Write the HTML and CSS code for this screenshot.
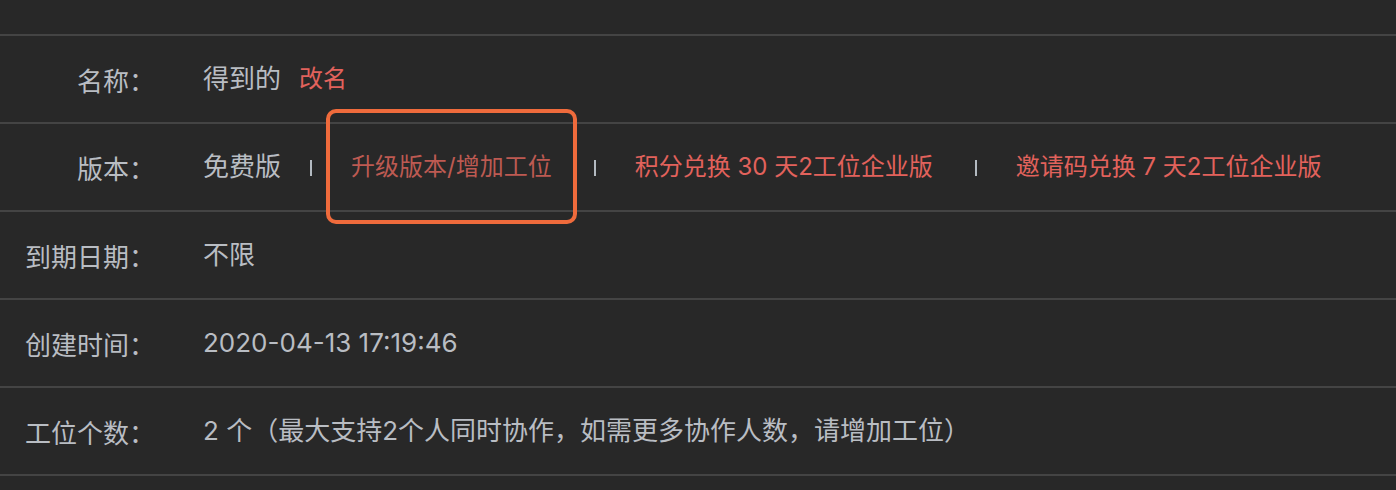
FILE: index.html
```html
<!DOCTYPE html>
<html lang="zh-CN">
<head>
<meta charset="utf-8">
<title>工作区信息</title>
<link rel="stylesheet" href="styles.css">
</head>
<body>
<div class="info">
  <div class="row">
    <div class="label">名称：</div>
    <div class="value">得到的<a class="link rename">改名</a></div>
  </div>
  <div class="row">
    <div class="label">版本：</div>
    <div class="value">
      <span class="plain">免费版</span>
      <span class="sep"></span>
      <a class="link upgrade">升级版本/增加工位<span class="mark"></span></a>
      <span class="sep"></span>
      <a class="link">积分兑换 30 天2工位企业版</a>
      <span class="sep"></span>
      <a class="link">邀请码兑换 7 天2工位企业版</a>
    </div>
  </div>
  <div class="row">
    <div class="label">到期日期：</div>
    <div class="value">不限</div>
  </div>
  <div class="row">
    <div class="label">创建时间：</div>
    <div class="value">2020-04-13 17:19:46</div>
  </div>
  <div class="row last">
    <div class="label">工位个数：</div>
    <div class="value">2 个（最大支持2个人同时协作，如需更多协作人数，请增加工位）</div>
  </div>
</div>
</body>
</html>
```
FILE: styles.css
```css
html, body {
  margin: 0;
  padding: 0;
  background: #282828;
}
body {
  width: 1396px;
  height: 490px;
  overflow: hidden;
  font-family: Inter, "Noto Sans CJK SC", sans-serif;
  font-size: 26px;
  color: #b9bdc3;
}
.info {
  padding-top: 34px;
}
.row {
  display: flex;
  align-items: center;
  height: 86px;
  border-top: 2px solid #444444;
}
.row.last {
  border-bottom: 2px solid #444444;
}
.label {
  width: 155px;
  flex: none;
  text-align: right;
  white-space: nowrap;
}
.value {
  margin-left: 48px;
  display: flex;
  align-items: center;
  white-space: nowrap;
  line-height: 36px;
}
.link {
  color: #e2625c;
  font-size: 24px;
  padding: 0 13px 0 10px;
  cursor: pointer;
}
.rename {
  padding-left: 18px;
}
.upgrade {
  position: relative;
  color: #bd5a52;
}
.sep {
  display: inline-block;
  width: 2px;
  height: 16px;
  margin: 2px 29px 0;
  background: #b3bac1;
}
.mark {
  position: absolute;
  left: -15px;
  right: -12px;
  top: -40px;
  bottom: -39px;
  border: 4px solid #ef6b3c;
  border-radius: 10px;
  pointer-events: none;
}
```
